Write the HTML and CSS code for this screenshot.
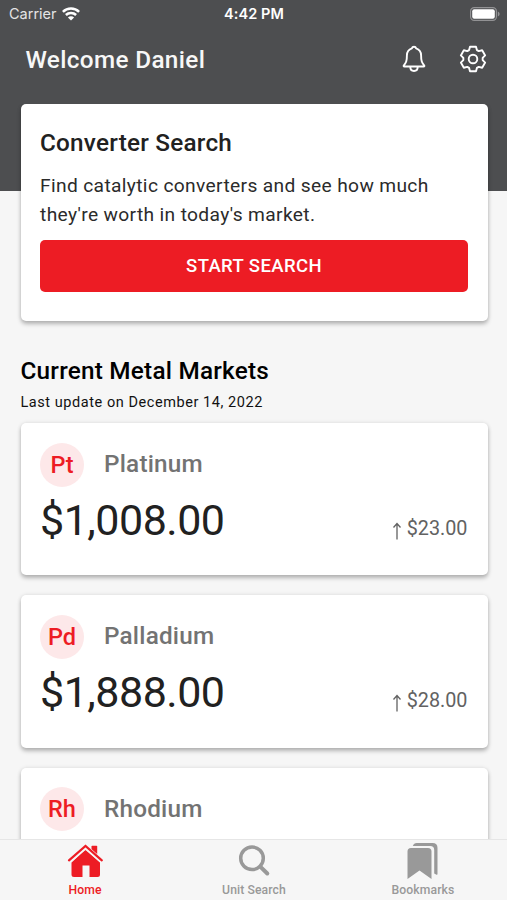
FILE: index.html
```
<!DOCTYPE html>
<html lang="en">
<head>
<meta charset="utf-8">
<title>Metal Markets</title>
<link rel="stylesheet" href="styles.css">
</head>
<body>
<div class="app">
  <header class="hero">
    <div class="status">
      <div class="carrier"><span>Carrier</span>
        <svg width="18" height="14" viewBox="0 0 18 14" fill="none" stroke="#fff" stroke-width="2.5"><path d="M.9 4.8a11.5 11.5 0 0 1 16.2 0M3.9 8a7.2 7.2 0 0 1 10.2 0"/><path d="M9 13.6 5.9 10.500a4.400 4.400 0 0 1 6.200 0z" fill="#fff" stroke="none"/></svg>
      </div>
      <div class="time">4:42 PM</div>
      <div class="battery"><svg width="30" height="14" viewBox="0 0 30 14"><rect x=".6" y=".6" width="25.800" height="12.800" rx="3.600" fill="#4d4e50" stroke="#929294" stroke-width="1.200"/><rect x="2.200" y="2.200" width="22.600" height="9.600" rx="2" fill="#fff"/><path d="M27.800 4.500c2.400 1 2.400 4 0 5z" fill="#929294"/></svg></div>
    </div>
    <div class="titlebar">
      <h1>Welcome Daniel</h1>
      <div class="actions">
        <svg width="28" height="28" viewBox="-14 -14 28 28"><path d="M0-12.300C-1.100-12.300-1.900-11.500-2.100-10.700C-5.300-9.700-7.100-7.200-7.100-3.600C-7.100 2.500-8 3.600-10 6.200C-10.700 7-10.400 7.500-9.600 7.500H9.600C10.400 7.500 10.700 7 10 6.200C8 3.600 7.100 2.500 7.100-3.600C7.100-7.200 5.300-9.700 2.100-10.700C1.900-11.500 1.100-12.300 0-12.300ZM-3.700 8C-3.700 13.300 3.700 13.300 3.700 8"/></svg>
        <svg width="28" height="28" viewBox="-14 -14 28 28"><path d="M-3-12.300H3L3.900-8.900 5.760-7.830 9.150-8.750 12.150-3.550 9.660-1.070V1.070L12.150 3.550 9.150 8.750 5.760 7.830 3.900 8.900 3 12.300H-3L-3.900 8.900-5.760 7.830-9.150 8.750-12.150 3.550-9.660 1.070V-1.070L-12.150-3.550-9.150-8.750-5.760-7.830-3.900-8.900Z"/><circle r="4.300"/></svg>
      </div>
    </div>
  </header>
  <main class="content">
    <section class="card search">
      <h2>Converter Search</h2>
      <p>Find catalytic converters and see how much they're worth in today's market.</p>
      <button class="start">START SEARCH</button>
    </section>
    <h2 class="heading">Current Metal Markets</h2>
    <p class="updated">Last update on December 14, 2022</p>
    <div class="metals">
      <article class="card metal">
        <div class="name"><span class="symbol">Pt</span><h3>Platinum</h3></div>
        <div class="values"><span class="price">$1,008.00</span><span class="change"><svg width="10" height="18" viewBox="0 0 10 18"><path d="M5 17.500V1.500M1.500 5.500 5 1.500 8.500 5.500"/></svg>$23.00</span></div>
      </article>
      <article class="card metal">
        <div class="name"><span class="symbol">Pd</span><h3>Palladium</h3></div>
        <div class="values"><span class="price">$1,888.00</span><span class="change"><svg width="10" height="18" viewBox="0 0 10 18"><path d="M5 17.500V1.500M1.500 5.500 5 1.500 8.500 5.500"/></svg>$28.00</span></div>
      </article>
      <article class="card metal">
        <div class="name"><span class="symbol">Rh</span><h3>Rhodium</h3></div>
      </article>
    </div>
  </main>
  <nav class="tabs">
    <a class="tab active"><svg width="36" height="38" viewBox="0 0 36 38"><path d="M18.500 6.500 33 19.500V31.500Q33 34 30.500 34H22.500V22.500H15.500V34H7Q4.500 34 4.500 31.500V19.500Z"/><path d="M24.500 3.500Q24.500 2.800 25.200 2.800H29.500Q30.200 2.800 30.200 3.500V13L24.500 8Z"/><path class="gap" d="M1.500 18.600 18.500 4 35.500 18.600"/><path class="roof" d="M2 17.300 18.500 3 34.800 17.300"/></svg><span>Home</span></a>
    <a class="tab"><svg width="36" height="38" viewBox="0 0 36 38"><circle class="line" cx="16" cy="15.300" r="11.300"/><path class="handle" d="m24.500 23.800 6.800 6.700"/></svg><span>Unit Search</span></a>
    <a class="tab"><svg width="36" height="38" viewBox="0 0 36 38"><path d="M2.500 8.500Q2.500 5 6 5H23Q26.500 5 26.500 8.500V36L14.500 27.500 2.500 36Z"/><path d="M7.800 3Q8.800 0 11.700 0H27.500Q32.500 0 32.500 5V31Q32.500 32 31.500 31.700L29.200 30.500V7Q29.200 3 25.200 3Z"/></svg><span>Bookmarks</span></a>
  </nav>
</div>
</body>
</html>
```

FILE: styles.css
```
* { box-sizing: border-box; }
body { margin: 0; background: #f6f6f6; font-family: Roboto, sans-serif; color: #212121; }
h1, h2, h3, p { margin: 0; font-weight: 500; }
svg { display: block; flex: none; }

.app { height: 900px; display: flex; flex-direction: column; overflow: hidden; }

.hero { flex: none; height: 191px; background: #4d4e50; color: #fff; }
.status { height: 27px; display: grid; grid-template-columns: 1fr auto 1fr; align-items: center; padding: 0 7px 0 9px; font: 14.500px/27px Inter, sans-serif; }
.carrier { display: flex; align-items: center; gap: 5px; color: #e4e4e5; }
.time { font-weight: 600; letter-spacing: .1px; margin-left: -1px; }
.battery { justify-self: end; }
.titlebar { height: 64px; display: flex; align-items: center; justify-content: space-between; padding: 0 20px 0 25.500px; }
.titlebar h1 { font-size: 24.300px; letter-spacing: .35px; color: #f7f7f7; }
.actions { display: flex; gap: 31px; }
.actions svg { fill: none; stroke: #fff; stroke-width: 1.900; stroke-linejoin: round; stroke-linecap: round; }

.content { flex: 1; min-height: 0; margin-top: -87.500px; padding: 0 19.500px 0 20.500px; overflow: hidden; }
.card { background: #fff; border-radius: 5px; padding: 20px; box-shadow: 0 3px 4px rgba(0, 0, 0, .26), 0 0 4px rgba(0, 0, 0, .1); }
.search { height: 217.500px; padding: 20px 19.500px; }
.search h2 { font-size: 24.300px; line-height: 38px; letter-spacing: .23px; }
.search p { margin-top: 9.500px; font-size: 19.200px; line-height: 29.300px; font-weight: 400; letter-spacing: .35px; color: #2b2b2b; }
.start { display: block; width: 100%; height: 52px; margin-top: 10px; padding: 0; border: 0; border-radius: 5px; background: #ed1c24; color: #fff; font: 500 18.500px Roboto, sans-serif; letter-spacing: .4px; }
.heading { margin-top: 33.500px; font-size: 24.300px; line-height: 32px; letter-spacing: .23px; color: #000; }
.updated { margin-top: 6px; font-size: 14.500px; line-height: 20px; font-weight: 400; letter-spacing: .56px; color: #111; }
.metals { display: grid; gap: 20px; margin-top: 10.500px; }
.metal { height: 152.300px; padding: 19.500px 20px 20px 19.500px; }
.name { display: flex; align-items: center; gap: 20px; height: 44px; }
.symbol { width: 44px; height: 44px; border-radius: 50%; background: #fde8e9; color: #ed1c24; font-size: 23.500px; line-height: 44px; font-weight: 500; text-align: center; }
.name h3 { font-size: 24.300px; line-height: 30px; margin-top: -1px; letter-spacing: .2px; color: #737373; }
.values { display: flex; align-items: baseline; justify-content: space-between; height: 70px; line-height: 67px; }
.price { font-size: 43px; letter-spacing: -.5px; }
.change { display: flex; align-items: center; gap: 5px; position: relative; top: 5px; font-size: 19.800px; color: #626262; }
.change svg { fill: none; stroke: #626262; stroke-width: 1.300; margin-top: 4px; }

.tabs { position: relative; flex: none; height: 61px; display: grid; grid-template-columns: repeat(3, 1fr); background: #f6f6f6; border-top: 1px solid #e6e6e6; }
.tab { display: flex; flex-direction: column; align-items: center; padding-top: 3px; color: #999; font-size: 12.200px; line-height: 16px; font-weight: 500; letter-spacing: .1px; }
.tab.active { color: #ed1c24; }
.tab svg { fill: currentColor; margin-bottom: 1px; }
.tab span { padding-left: 1px; }
.tab .gap { fill: none; stroke: #f6f6f6; stroke-width: 4.500; }
.tab .roof { fill: none; stroke: currentColor; stroke-width: 2.200; stroke-linecap: round; }
.tab .line, .tab .handle { fill: none; stroke: currentColor; stroke-width: 3.500; }
.tab .handle { stroke-width: 4; stroke-linecap: round; }
```
